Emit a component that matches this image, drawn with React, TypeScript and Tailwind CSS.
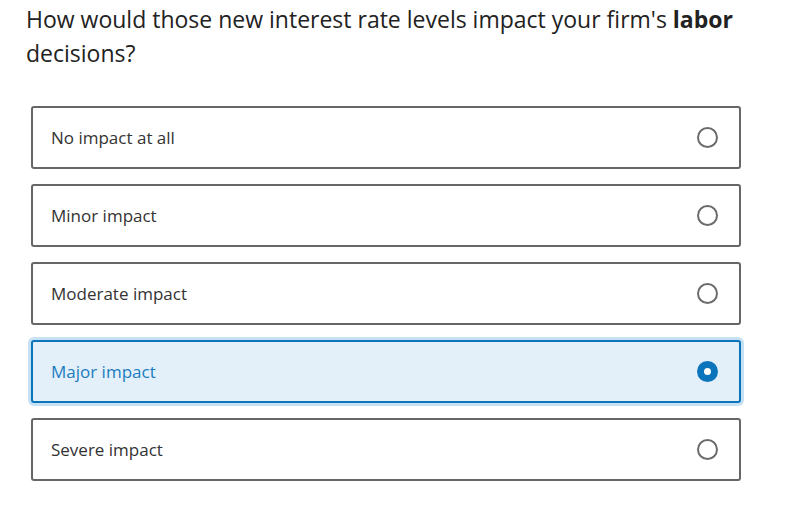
import React, { useState } from "react";

const options = [
  "No impact at all",
  "Minor impact",
  "Moderate impact",
  "Major impact",
  "Severe impact",
];

function Radio({ checked }: { checked: boolean }) {
  return checked ? (
    <span className="flex h-[21px] w-[21px] items-center justify-center rounded-full bg-[#0b74bb]">
      <span className="h-[7px] w-[7px] rounded-full bg-white" />
    </span>
  ) : (
    <span className="h-[21px] w-[21px] rounded-full border-2 border-[#6b6b6b] bg-white" />
  );
}

export default function App() {
  const [selected, setSelected] = useState(3);
  return (
    <div
      className="min-h-[508px] w-[787px] bg-white pt-[2px]"
      style={{ fontFamily: '"Open Sans", "Noto Sans", sans-serif' }}
    >
      <h1 className="pl-[26px] pr-[30px] text-[23px] leading-[34px] font-normal text-[#222]">
        How would those new interest rate levels impact your firm's <b className="font-bold">labor</b> decisions?
      </h1>
      <div className="mt-[36px] flex flex-col gap-[15px] pl-[31px] w-[741px]">
        {options.map((label, i) => {
          const on = i === selected;
          return (
            <button
              key={label}
              onClick={() => setSelected(i)}
              className={
                on
                  ? "flex h-[63px] w-full items-center justify-between rounded-[3px] border-2 border-[#0b74bb] bg-[#e3f0f9] pl-[18px] pr-[21px] text-left text-[17px] text-[#1a7cc0] shadow-[0_0_0_3px_#c6e1f4]"
                  : "flex h-[63px] w-full items-center justify-between rounded-[3px] border-2 border-[#666] bg-white pl-[18px] pr-[21px] text-left text-[17px] text-[#333]"
              }
            >
              <span>{label}</span>
              <Radio checked={on} />
            </button>
          );
        })}
      </div>
    </div>
  );
}
